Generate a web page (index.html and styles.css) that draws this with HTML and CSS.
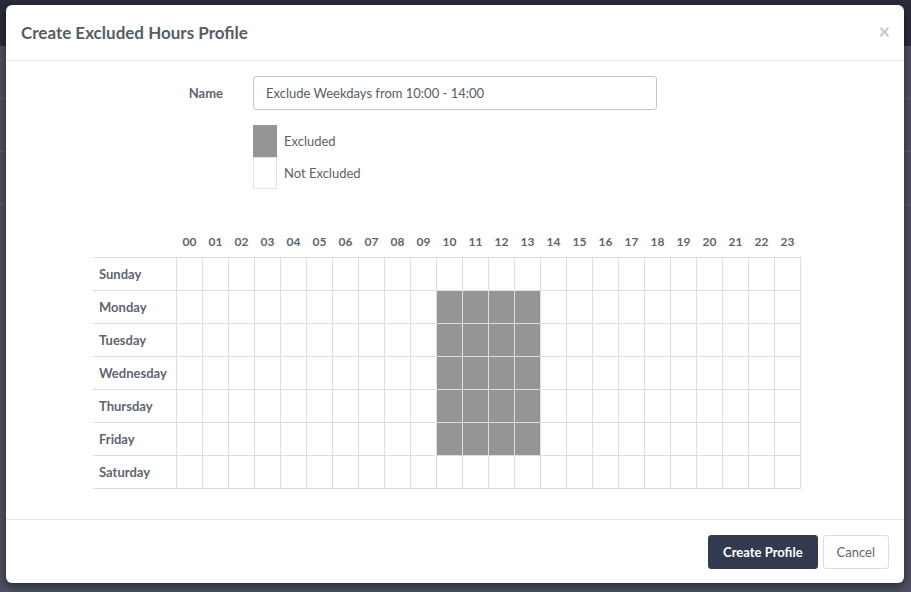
FILE: index.html
```html
<!DOCTYPE html>
<html>
<head>
    <title>Create Excluded Hours Profile</title>
    <link rel="stylesheet" href="styles.css">
</head>
<body>
    <div class="backdrop">
        <div class="topbar"></div>
        <div class="page-lines">
            <div class="line"></div>
            <div class="line"></div>
            <div class="line"></div>
        </div>
    </div>

    <div class="modal">
        <div class="modal-header">
            <h4>Create Excluded Hours Profile</h4>
            <span class="close">&times;</span>
        </div>

        <div class="modal-body">
            <div class="form-row">
                <label for="name">Name</label>
                <input type="text" id="name" value="Exclude Weekdays from 10:00 - 14:00">
            </div>

            <div class="legend">
                <div class="legend-item">
                    <span class="swatch excluded"></span>
                    <span>Excluded</span>
                </div>
                <div class="legend-item">
                    <span class="swatch"></span>
                    <span>Not Excluded</span>
                </div>
            </div>

            <table class="hours">
                <thead>
                    <tr id="hourRow">
                        <th class="day"></th>
                    </tr>
                </thead>
                <tbody id="hourBody">
                </tbody>
            </table>
        </div>

        <div class="modal-footer">
            <button class="btn btn-primary">Create Profile</button>
            <button class="btn btn-default">Cancel</button>
        </div>
    </div>

    <script>
        const days = ["Sunday", "Monday", "Tuesday", "Wednesday", "Thursday", "Friday", "Saturday"];

        // header row with the hours
        const hourRow = document.getElementById("hourRow");
        for (let h = 0; h < 24; h++) {
            const th = document.createElement("th");
            th.textContent = String(h).padStart(2, "0");
            hourRow.appendChild(th);
        }

        // weekdays 10:00 - 14:00 are excluded
        const body = document.getElementById("hourBody");
        for (let d = 0; d < days.length; d++) {
            const row = document.createElement("tr");
            row.innerHTML = `<td class="day">${days[d]}</td>`;
            for (let h = 0; h < 24; h++) {
                const cell = document.createElement("td");
                if (d > 0 && d < 6 && h >= 10 && h < 14) {
                    cell.className = "excluded";
                }
                row.appendChild(cell);
            }
            body.appendChild(row);
        }
    </script>
</body>
</html>
```

FILE: styles.css
```css
body {
    margin: 0;
    padding: 0;
    width: 911px;
    height: 592px;
    overflow: hidden;
    font-family: "Lato", "Open Sans", sans-serif;
    color: #58616c;
    background-color: #4d5060;
}
.backdrop {
    height: 592px;
}
.topbar {
    height: 46px;
    background-color: #292c3b;
}
.page-lines .line {
    height: 1px;
    margin-top: 52px;
    background-color: #5a5d6c;
}
.modal {
    position: absolute;
    left: 6px;
    top: 5px;
    width: 898px;
    height: 578px;
    background-color: #fff;
    border-radius: 6px;
    box-shadow: 0 3px 10px rgba(0, 0, 0, 0.5);
    display: flex;
    flex-direction: column;
}
.modal-header {
    height: 55px;
    border-bottom: 1px solid #e5e5e5;
    display: flex;
    align-items: center;
    justify-content: space-between;
    padding: 0 14px 0 15px;
}
.modal-header h4 {
    margin: 0;
    font-size: 17px;
    font-weight: 700;
    color: #545e69;
}
.close {
    font-size: 20px;
    font-weight: 700;
    color: #c8c8c8;
    line-height: 1;
    margin-top: -4px;
}
.modal-body {
    flex: 1;
    padding: 15px 0 0 87px;
}
.form-row {
    display: flex;
    align-items: center;
}
.form-row label {
    width: 160px;
    padding-right: 30px;
    text-align: right;
    font-size: 13px;
    font-weight: 700;
    color: #5d6670;
    box-sizing: border-box;
}
.form-row input {
    width: 404px;
    height: 34px;
    box-sizing: border-box;
    border: 1px solid #c9c4c4;
    border-radius: 3px;
    padding: 0 12px;
    font-family: inherit;
    font-size: 13px;
    color: #555d66;
}
.legend {
    margin: 15px 0 0 160px;
}
.legend-item {
    display: flex;
    align-items: center;
    font-size: 13px;
    color: #5a636d;
}
.swatch {
    width: 24px;
    height: 32px;
    box-sizing: border-box;
    border: 1px solid #e3e3e3;
    margin-right: 7px;
}
.swatch.excluded {
    background-color: #959595;
    border-color: #959595;
}
.hours {
    margin-top: 43px;
    border-collapse: collapse;
}
.hours th {
    height: 23px;
    width: 26px;
    padding: 2px 0 0;
    font-size: 12px;
    font-weight: 700;
    color: #5d6670;
    text-align: center;
    vertical-align: top;
}
.hours th.day {
    width: 83px;
}
.hours td {
    height: 32px;
    width: 25px;
    padding: 0;
    border: 1px solid #dedede;
}
.hours td.day {
    width: 77px;
    padding-left: 6px;
    border-left: none;
    font-size: 13px;
    font-weight: 700;
    color: #5d6670;
}
.hours td.excluded {
    background-color: #959595;
}
.modal-footer {
    height: 63px;
    border-top: 1px solid #e5e5e5;
    display: flex;
    align-items: center;
    justify-content: flex-end;
    padding: 0 15px 0 0;
}
.btn {
    height: 34px;
    box-sizing: border-box;
    border-radius: 3px;
    font-family: inherit;
    font-size: 13px;
    padding: 0 14px;
    cursor: pointer;
}
.btn-primary {
    background-color: #333a4f;
    border: 1px solid #333a4f;
    color: #fff;
    font-weight: 700;
}
.btn-default {
    margin-left: 5px;
    padding: 0 13px;
    background-color: #fff;
    border: 1px solid #dddddd;
    color: #5d6670;
}
```
